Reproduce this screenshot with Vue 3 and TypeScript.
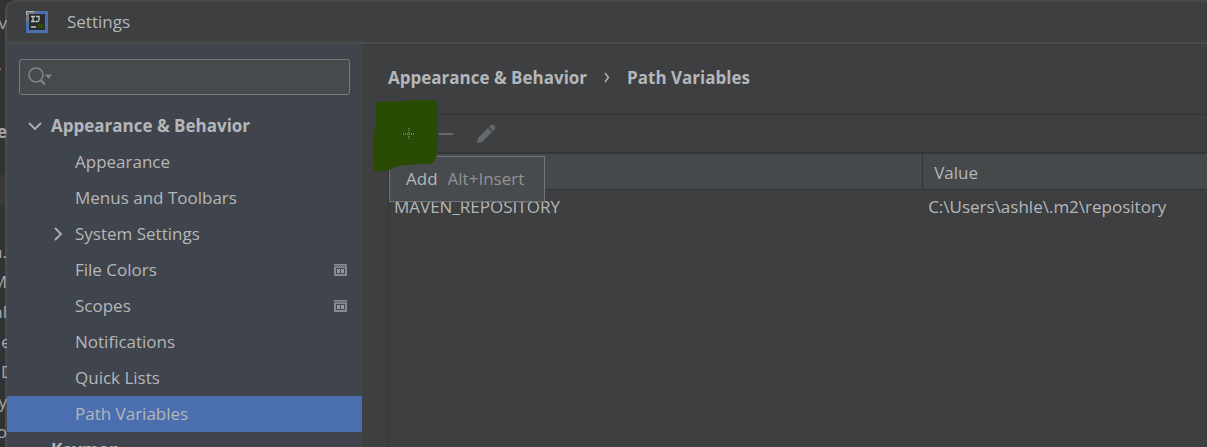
<script setup lang="ts">
import { ref } from 'vue'

interface TreeItem {
  label: string
  expandable?: boolean
  project?: boolean
}

const items: TreeItem[] = [
  { label: 'Appearance' },
  { label: 'Menus and Toolbars' },
  { label: 'System Settings', expandable: true },
  { label: 'File Colors', project: true },
  { label: 'Scopes', project: true },
  { label: 'Notifications' },
  { label: 'Quick Lists' },
  { label: 'Path Variables' },
]
const selected = ref('Path Variables')
const query = ref('')
const variables = [{ name: 'MAVEN_REPOSITORY', value: 'C:\\Users\\ashle\\.m2\\repository' }]
const editorLines = [
  { text: 'n.', start: false },
  { text: 'M', start: false },
  { text: 'al', start: false },
  { text: 'e', start: true },
  { text: 'D', start: true },
  { text: 'y', start: false },
  { text: 'o', start: false },
]
</script>

<template>
  <div class="desktop">
    <div class="editor" aria-hidden="true">
      <span class="first">v</span>
      <span class="second">,</span>
      <b class="third">e</b>
      <i class="caret-row"></i>
      <span v-for="line in editorLines" :key="line.text" class="line" :class="{ start: line.start }">{{ line.text }}</span>
    </div>
    <div class="dialog">
      <header class="titlebar">
        <svg class="logo" width="22" height="22" viewBox="0 0 22 22" aria-hidden="true">
          <rect width="22" height="22" fill="#4b6eaf" />
          <path d="M0 0H11L0 12Z" fill="#777a7e" />
          <path d="M0 .5H8M.5 0V4" stroke="#b4b7ba" />
          <rect x="3" y="3" width="16" height="16" fill="#2a2c2e" />
          <path d="M5 5.500H9M7 5.500V10.500M5 10.500H9M10 5.500H13V9Q13 10.500 11.500 10.500H9.500" fill="none" stroke="#c4c6c8" stroke-width="1.300" />
          <path d="M5 16H10" stroke="#c4c6c8" stroke-width="1.500" />
          <path d="M12 15H18" stroke="#294b08" stroke-width="4" />
        </svg>
        <span>Settings</span>
      </header>
      <div class="content">
        <aside class="sidebar">
          <label class="search">
            <svg width="26" height="20" viewBox="0 0 26 20" aria-hidden="true">
              <circle cx="8" cy="8" r="7" fill="none" stroke="#7f8487" stroke-width="1.600" />
              <path d="M12.500 13L17 17.500" stroke="#7f8487" stroke-width="2.200" />
              <path d="M17 7.500H24L20.500 12Z" fill="#7f8487" />
            </svg>
            <input v-model="query" type="text" aria-label="Search settings" />
          </label>
          <nav class="tree">
            <button class="row group" type="button">
              <svg class="chevron" width="14" height="14" viewBox="0 0 14 14" aria-hidden="true">
                <path d="M1 4L7 10L13 4" fill="none" stroke="#afb1b3" stroke-width="1.800" />
              </svg>
              <span>Appearance &amp; Behavior</span>
            </button>
            <button
              v-for="item in items"
              :key="item.label"
              type="button"
              class="row child"
              :class="{ selected: selected === item.label }"
              @click="selected = item.label"
            >
              <svg class="chevron" width="14" height="14" viewBox="0 0 14 14" aria-hidden="true">
                <path v-if="item.expandable" d="M4 1L10 7L4 13" fill="none" stroke="#afb1b3" stroke-width="1.800" />
              </svg>
              <span>{{ item.label }}</span>
              <svg v-if="item.project" class="project" width="13" height="12" viewBox="0 0 13 12" aria-hidden="true">
                <path d="M0 0H13V12H0Z" fill="#868a8e" />
                <path d="M2 4H11V10H2Z" fill="#464a50" />
                <path d="M3 5H6V9H3ZM7 5H10V9H7Z" fill="#94989b" />
                <path d="M1 1.500H12M0 2.500H13" stroke="#5c6065" stroke-dasharray="1 1" />
              </svg>
            </button>
            <button class="row group" type="button">
              <span class="chevron"></span>
              <span>Keymap</span>
            </button>
          </nav>
        </aside>
        <main class="page">
          <h1 class="crumbs">
            <span>Appearance &amp; Behavior</span>
            <svg width="6" height="12" viewBox="0 0 6 12" aria-hidden="true">
              <path d="M1 1L4.500 5.500L1 10" fill="none" stroke="#afb1b3" stroke-width="1.500" />
            </svg>
            <span>Path Variables</span>
          </h1>
          <section class="panel">
            <div class="toolbar">
              <button type="button" class="add" aria-label="Add">
                <svg class="marker" width="66" height="74" viewBox="0 0 66 74" aria-hidden="true">
                  <path d="M3 5Q2 3 5 3L32 2Q35 0 40 1L58 1Q65 2 65 8L64 55Q63 65 53 65L32 66Q22 67 17 71Q10 73 1 72L0 33L3 29Z" fill="#294b04" />
                </svg>
                <svg class="glyph" width="14" height="14" viewBox="0 0 14 14" aria-hidden="true">
                  <path d="M7 1V13M1 7H13" stroke="#819078" stroke-width="1.300" stroke-dasharray="1 1" />
                </svg>
              </button>
              <button type="button" aria-label="Remove">
                <svg width="16" height="16" viewBox="0 0 16 16" aria-hidden="true">
                  <path d="M1 8H15" stroke="#64686b" stroke-width="2" />
                </svg>
              </button>
              <button type="button" aria-label="Edit">
                <svg width="20" height="20" viewBox="0 0 20 20" aria-hidden="true">
                  <path d="M1 19L2 14L12 4L16 8L6 18ZM13 3L15 1Q16.500 0 18 1.500L19 2.500Q20 4 19 5L17 7Z" fill="#64686b" />
                </svg>
              </button>
              <div class="tooltip" role="tooltip"><span>Add</span><span class="keys">Alt+Insert</span></div>
            </div>
            <table>
              <thead>
                <tr><th class="name" aria-label="Name"></th><th>Value</th></tr>
              </thead>
              <tbody>
                <tr v-for="v in variables" :key="v.name"><td>{{ v.name }}</td><td>{{ v.value }}</td></tr>
              </tbody>
            </table>
          </section>
        </main>
      </div>
    </div>
  </div>
</template>

<style>
body {
  background: #3c3e40;
}
</style>

<style scoped>
.desktop {
  display: flex;
  height: 100vh;
  overflow: hidden;
  box-sizing: border-box;
  background: #303234;
  color: #b4b7ba;
  font: 17px/24px "Open Sans", "Noto Sans", sans-serif;
}
.editor {
  z-index: 1;
  width: 7px;
  margin-right: -2px;
  flex: none;
  display: flex;
  flex-direction: column;
  align-items: flex-end;
  overflow: hidden;
  color: #a6a9ab;
}
.editor > * {
  flex: none;
}
.first {
  margin-top: 11px;
}
.second {
  margin-top: 17px;
  padding-right: 5px;
}
.third {
  margin-top: 44px;
}
.caret-row {
  width: 5px;
  height: 30px;
  margin: 31px 2px 35px 0;
  background: #3a3a38;
}
.line {
  height: 30px;
}
.start {
  align-self: flex-start;
  padding-left: 1px;
}
.dialog {
  flex: 1;
  min-width: 0;
  display: flex;
  flex-direction: column;
  border-top: 2px solid #48494b;
  border-left: 2px solid #4a4c4e;
  border-top-left-radius: 10px;
  background: #3d3f41;
  overflow: hidden;
}
.titlebar {
  display: flex;
  align-items: center;
  gap: 19px;
  height: 40px;
  flex: none;
  padding-left: 19px;
  border-bottom: 2px solid #494b4d;
}
.content {
  display: flex;
  flex: 1;
  min-height: 0;
}
.sidebar {
  width: 355px;
  flex: none;
  background: #40444c;
  overflow: hidden;
}
.search {
  display: flex;
  align-items: center;
  gap: 4px;
  height: 36px;
  box-sizing: border-box;
  margin: 15px 12px 13px;
  padding-left: 8px;
  border: 1px solid #777c80;
  border-radius: 3px;
  background: #464a4c;
}
.search input {
  flex: 1;
  min-width: 0;
  border: 0;
  outline: 0;
  background: transparent;
  color: inherit;
  font: inherit;
}
button {
  border: 0;
  background: none;
  color: inherit;
  font: inherit;
}
.row {
  display: flex;
  align-items: center;
  gap: 10px;
  width: 100%;
  height: 36px;
  padding: 0 15px 0 44px;
  text-align: left;
}
.group {
  padding-left: 21px;
  gap: 9px;
  font-weight: 700;
}
.chevron {
  width: 14px;
  flex: none;
}
.selected {
  background: #4b6eaf;
}
.project {
  margin-left: auto;
}
.page {
  flex: 1;
  min-width: 0;
  display: flex;
  flex-direction: column;
  padding-left: 26px;
}
.crumbs {
  display: flex;
  align-items: center;
  gap: 17px;
  margin: 22px 0 24px;
  font-size: 17px;
  line-height: 24px;
  font-weight: 700;
}
.panel {
  flex: 1;
  border: 1px solid #323436;
  border-width: 1px 0 0 1px;
}
.toolbar {
  position: relative;
  display: flex;
  align-items: center;
  gap: 22px;
  height: 37px;
  padding-left: 13px;
}
.toolbar button {
  display: flex;
  padding: 0;
}
.add {
  position: relative;
}
.marker {
  position: absolute;
  left: -29px;
  top: -28px;
  z-index: 3;
}
.glyph {
  position: relative;
  z-index: 4;
}
.tooltip {
  position: absolute;
  left: 0;
  top: 41px;
  z-index: 2;
  display: flex;
  gap: 10px;
  padding: 10px 20px 10px 16px;
  border: 1px solid #717579;
  background: #484b4d;
}
.keys {
  color: #8f9396;
}
table {
  width: 100%;
  border-collapse: separate;
  border-spacing: 0;
  table-layout: fixed;
}
th {
  height: 38px;
  box-sizing: border-box;
  padding: 2px 11px 0;
  border-top: 2px solid #323436;
  border-bottom: 1px solid #323436;
  background: #45494b;
  font-weight: 400;
  text-align: left;
}
.name {
  width: 65.3%;
  border-right: 1px solid #323436;
}
td {
  height: 34px;
  padding: 0 5px;
}
</style>
